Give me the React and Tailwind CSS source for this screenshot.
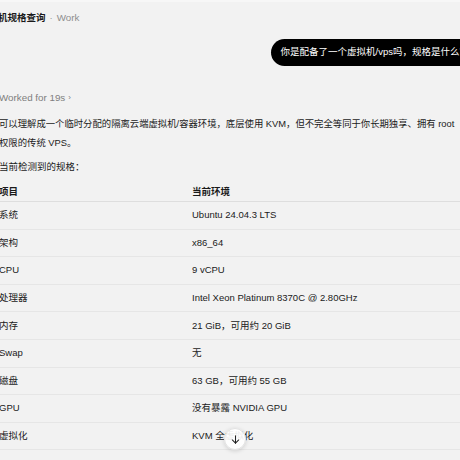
import React from "react";

const rows = [
  ["系统", "Ubuntu 24.04.3 LTS"],
  ["架构", "x86_64"],
  ["CPU", "9 vCPU"],
  ["处理器", "Intel Xeon Platinum 8370C @ 2.80GHz"],
  ["内存", "21 GiB，可用约 20 GiB"],
  ["Swap", "无"],
  ["磁盘", "63 GB，可用约 55 GB"],
  ["GPU", "没有暴露 NVIDIA GPU"],
  ["虚拟化", "KVM 全虚拟化"],
];

export default function App() {
  return (
    <div
      className="relative h-[460px] w-[460px] overflow-hidden bg-[#f2f2f2] text-[#1a1a1a]"
      style={{ fontFamily: '"Liberation Sans", "Noto Sans CJK SC", sans-serif' }}
    >
      <div className="h-[2px] bg-[#f7f7f7]" />
      <div className="-ml-px w-[500px] text-[9.5px]">
        {/* thread header */}
        <div className="-ml-[20px] mt-[9px] flex h-[14px] items-center gap-[4px] leading-[14px]">
          <span className="font-bold">虚拟机规格查询</span>
          <span className="text-[#9a9a9a]">·</span>
          <span className="text-[9.8px] text-[#8f8f8f]">Work</span>
        </div>

        {/* user message */}
        <div className="mt-[14px] flex justify-end pr-[16px]">
          <div className="flex h-[27px] items-center rounded-full bg-black pl-[10px] pr-[14px] text-white">
            你是配备了一个虚拟机/vps吗，规格是什么？
          </div>
        </div>

        {/* assistant reply */}
        <div className="w-[461px]">
          <div className="mt-[25px] flex h-[14px] items-center gap-[3px] text-[9.8px] text-[#7f7f7f]">
            <span>Worked for 19s</span>
            <span className="text-[8px]">›</span>
          </div>
          <p className="mt-[10px] w-[460px] text-[9.35px] leading-[19px]">
            可以理解成一个临时分配的隔离云端虚拟机/容器环境，底层使用 KVM，但不完全等同于你长期独享、拥有 root 权限的传统 VPS。
          </p>
          <p className="mt-[4px] text-[9.5px] leading-[19px]">当前检测到的规格：</p>

          <div className="mt-[7px]">
            <div className="grid h-[19px] grid-cols-[193px_1fr] items-center border-b border-[#dedede] font-bold">
              <span>项目</span>
              <span>当前环境</span>
            </div>
            {rows.map(([k, v]) => (
              <div
                key={k}
                className="grid h-[27.6px] grid-cols-[193px_1fr] items-center border-b border-[#e6e6e6]"
              >
                <span>{k}</span>
                <span>{v}</span>
              </div>
            ))}
          </div>
        </div>
      </div>

      {/* scroll-to-bottom button */}
      <button className="absolute left-[224px] top-[428px] flex h-[22px] w-[22px] items-center justify-center rounded-full border border-[#e2e2e2] bg-white/90 shadow-[0_1px_4px_rgba(0,0,0,0.15)]">
        <svg width="11" height="11" viewBox="0 0 24 24" fill="none" stroke="#222" strokeWidth="2.2" strokeLinecap="round" strokeLinejoin="round">
          <path d="M12 4v16" />
          <path d="M5 13l7 7 7-7" />
        </svg>
      </button>
    </div>
  );
}
